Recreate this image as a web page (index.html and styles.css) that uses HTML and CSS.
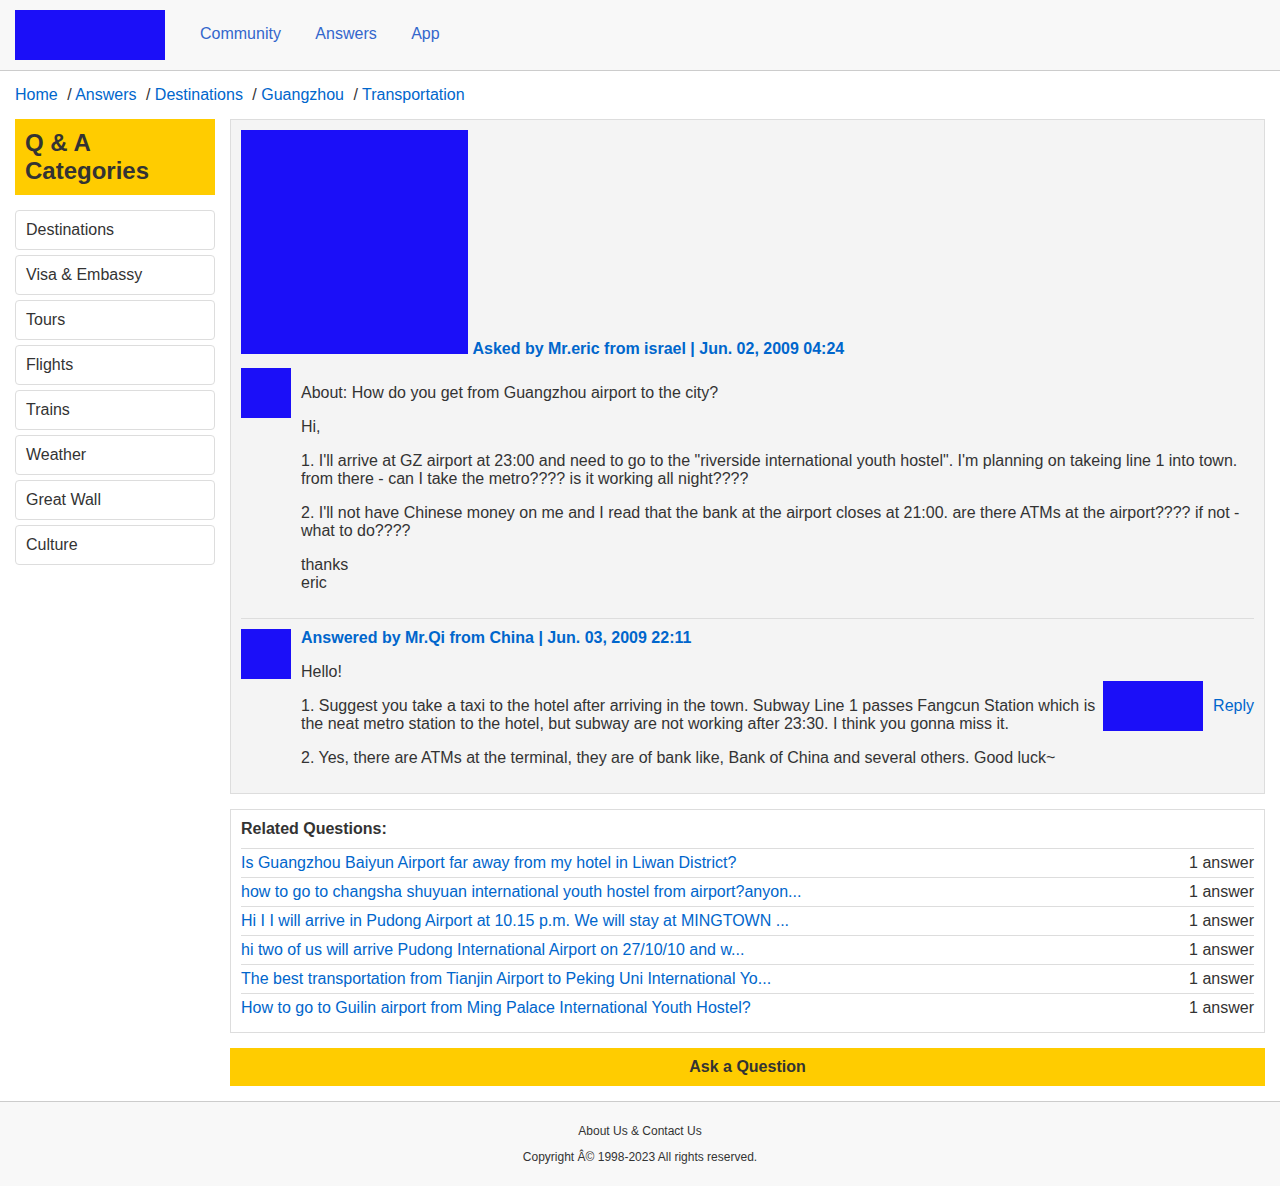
FILE: index.html
```html
<!DOCTYPE html>
<html lang="en">
<head>
<meta charset="utf-8">
<title>Guangzhou Transportation Q &amp; A</title>
<link rel="stylesheet" href="styles.css">
</head>
<body>
<header class="header">
  <div class="logo"></div>
  <nav class="nav">
    <a href="#">Community</a>
    <a href="#">Answers</a>
    <a href="#">App</a>
  </nav>
</header>
<nav class="breadcrumb">
  <a href="#">Home</a> / <a href="#">Answers</a> / <a href="#">Destinations</a> / <a href="#">Guangzhou</a> / <a href="#">Transportation</a>
</nav>
<div class="layout">
  <aside class="sidebar">
    <h2 class="sidebar-title">Q &amp; A Categories</h2>
    <ul class="categories">
      <li><a href="#">Destinations</a></li>
      <li><a href="#">Visa &amp; Embassy</a></li>
      <li><a href="#">Tours</a></li>
      <li><a href="#">Flights</a></li>
      <li><a href="#">Trains</a></li>
      <li><a href="#">Weather</a></li>
      <li><a href="#">Great Wall</a></li>
      <li><a href="#">Culture</a></li>
    </ul>
  </aside>
  <main class="content">
    <section class="thread">
      <div class="asked"><span class="picture"></span> <strong class="byline">Asked by Mr.eric from israel | Jun. 02, 2009 04:24</strong></div>
      <article class="post">
        <div class="avatar"></div>
        <div class="post-text">
          <p>About: How do you get from Guangzhou airport to the city?</p>
          <p>Hi,</p>
          <p>1. I'll arrive at GZ airport at 23:00 and need to go to the "riverside international youth hostel". I'm planning on takeing line 1 into town. from there - can I take the metro???? is it working all night????</p>
          <p>2. I'll not have Chinese money on me and I read that the bank at the airport closes at 21:00. are there ATMs at the airport???? if not - what to do????</p>
          <p>thanks<br>eric</p>
        </div>
      </article>
      <article class="post answer">
        <div class="avatar"></div>
        <div class="post-text">
          <strong class="byline">Answered by Mr.Qi from China | Jun. 03, 2009 22:11</strong>
          <p>Hello!</p>
          <p>1. Suggest you take a taxi to the hotel after arriving in the town. Subway Line 1 passes Fangcun Station which is the neat metro station to the hotel, but subway are not working after 23:30. I think you gonna miss it.</p>
          <p>2. Yes, there are ATMs at the terminal, they are of bank like, Bank of China and several others. Good luck~</p>
        </div>
        <div class="reply"><span class="reply-picture"></span><a href="#">Reply</a></div>
      </article>
    </section>
    <section class="related">
      <h3 class="related-title">Related Questions:</h3>
      <ul class="questions">
        <li><a href="#">Is Guangzhou Baiyun Airport far away from my hotel in Liwan District?</a><span>1 answer</span></li>
        <li><a href="#">how to go to changsha shuyuan international youth hostel from airport?anyon...</a><span>1 answer</span></li>
        <li><a href="#">Hi I I will arrive in Pudong Airport at 10.15 p.m. We will stay at MINGTOWN ...</a><span>1 answer</span></li>
        <li><a href="#">hi two of us will arrive Pudong International Airport on 27/10/10 and w...</a><span>1 answer</span></li>
        <li><a href="#">The best transportation from Tianjin Airport to Peking Uni International Yo...</a><span>1 answer</span></li>
        <li><a href="#">How to go to Guilin airport from Ming Palace International Youth Hostel?</a><span>1 answer</span></li>
      </ul>
    </section>
    <button class="ask" type="button">Ask a Question</button>
  </main>
</div>
<footer class="footer">
  <p>About Us &amp; Contact Us</p>
  <p>Copyright Â© 1998-2023 All rights reserved.</p>
</footer>
</body>
</html>
```
FILE: styles.css
```css
* {
  box-sizing: border-box;
}

body {
  margin: 0;
  background: #fff;
  color: #333;
  font-family: "Liberation Sans", Arial, sans-serif;
  font-size: 16px;
  line-height: 18px;
}

a {
  color: #06c;
  text-decoration: none;
}

ul {
  margin: 0;
  padding: 0;
  list-style: none;
}

.header {
  display: flex;
  padding: 10px 15px;
  background: #f8f8f8;
  border-bottom: 1px solid #ccc;
}

.logo {
  width: 150px;
  height: 50px;
  background: #1b0ff8;
}

.nav {
  padding: 15px 0 0 20px;
}

.nav a {
  margin: 0 15px;
  color: #36c;
}

.breadcrumb {
  padding: 15px;
}

.breadcrumb a {
  margin-right: 5px;
}

.layout {
  display: flex;
  align-items: flex-start;
  gap: 15px;
  padding: 0 15px 15px;
}

.sidebar {
  flex: 0 0 200px;
}

.sidebar-title {
  margin: 0 0 15px;
  padding: 10px;
  background: #fc0;
  font-size: 24px;
  line-height: 28px;
}

.categories {
  display: grid;
  gap: 5px;
}

.categories a {
  display: block;
  padding: 10px;
  border: 1px solid #ddd;
  border-radius: 4px;
  color: #333;
}

.content {
  display: grid;
  flex: 1;
  gap: 15px;
  min-width: 0;
}

.thread {
  padding: 10px;
  background: #f4f4f4;
  border: 1px solid #ddd;
}

.asked {
  margin-bottom: 10px;
}

.picture {
  display: inline-block;
  width: 227px;
  height: 224px;
  background: #1b0ff8;
}

.byline {
  color: #06c;
}

.post {
  display: flex;
}

.avatar {
  flex: none;
  width: 50px;
  height: 50px;
  margin-right: 10px;
  background: #1b0ff8;
}

.post-text {
  flex: 1;
}

.post-text p {
  margin: 16px 0;
}

.answer {
  margin-top: 10px;
  padding-top: 10px;
  border-top: 1px solid #ddd;
}

.reply {
  display: flex;
  align-items: center;
  gap: 10px;
}

.reply-picture {
  width: 100px;
  height: 50px;
  background: #1b0ff8;
}

.related {
  padding: 10px;
  border: 1px solid #ddd;
}

.related-title {
  margin: 0 0 10px;
  font-size: 16px;
}

.questions li {
  display: flex;
  justify-content: space-between;
  padding: 5px 0;
  border-top: 1px solid #ddd;
}

.ask {
  padding: 10px;
  background: #fc0;
  border: 0;
  color: #333;
  font: inherit;
  font-weight: bold;
}

.footer {
  padding: 10px;
  background: #f8f8f8;
  border-top: 1px solid #ccc;
  font-size: 12px;
  line-height: 14px;
  text-align: center;
}

.footer p {
  margin: 12px 0;
}
```
